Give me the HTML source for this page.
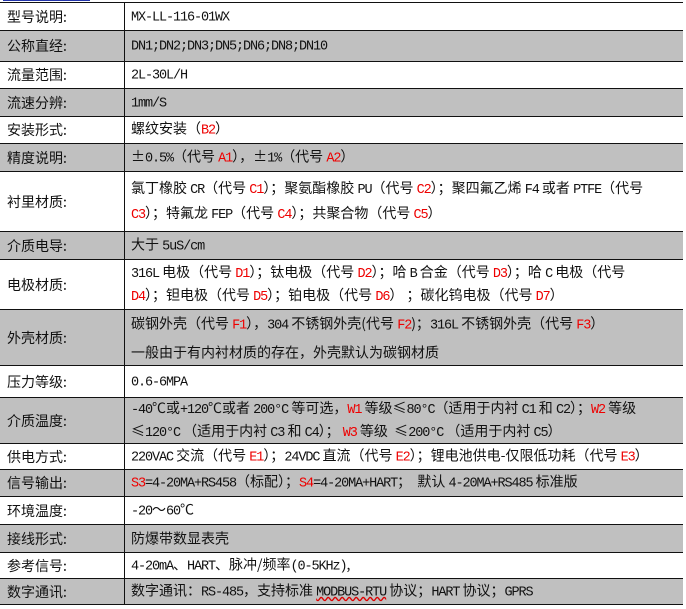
<!DOCTYPE html>
<html><head><meta charset="utf-8"><style>
body{margin:0;width:686px;height:609px;background:#fff;position:relative;overflow:hidden;font-family:"Noto Sans CJK SC","Liberation Sans",sans-serif;font-size:14px;color:#111}
.r{position:absolute;left:0;width:683px;border-top:1px solid #111;box-sizing:border-box}
.g{background:#c0c0c0}
.l{position:absolute;left:7px;font-size:14px;top:50%;transform:translateY(-50%);white-space:nowrap;line-height:16px}
.v{position:absolute;left:131px;right:0;top:50%;transform:translateY(-50%);line-height:25px;white-space:nowrap}
.d{position:absolute;left:124px;top:2px;width:1px;height:603px;background:#111}
i,b{font-style:normal;font-weight:normal;font-family:"Liberation Mono",monospace;font-size:13.5px;letter-spacing:-1.1px}
b{color:#e00}
</style></head><body>
<div style="position:absolute;left:3px;top:0;width:87px;height:1px;background:#2233aa"></div>
<div class="r" style="top:2px;height:28px"><span class="l">型号说明:</span><span class="v"><i>MX-LL-116-01WX</i></span></div>
<div class="r g" style="top:30px;height:31px"><span class="l">公称直经:</span><span class="v"><i>DN1;DN2;DN3;DN5;DN6;DN8;DN10</i></span></div>
<div class="r" style="top:61px;height:27px"><span class="l">流量范围:</span><span class="v"><i>2L-30L/H</i></span></div>
<div class="r g" style="top:88px;height:28px"><span class="l">流速分辨:</span><span class="v"><i>1mm/S</i></span></div>
<div class="r" style="top:116px;height:27px"><span class="l">安装形式:</span><span class="v">螺纹安装（<b>B2</b>）</span></div>
<div class="r g" style="top:143px;height:28px"><span class="l">精度说明:</span><span class="v">±<i>0.5%</i>（代号 <b>A1</b>），±<i>1%</i>（代号 <b>A2</b>）</span></div>
<div class="r" style="top:171px;height:60px"><span class="l">衬里材质:</span><span class="v" style="line-height:22px">氯丁橡胶 <i>CR</i>（代号 <b>C1</b>）；聚氨酯橡胶 <i>PU</i>（代号 <b>C2</b>）；聚四氟乙烯 <i>F4</i> 或者 <i>PTFE</i>（代号<br><b>C3</b>）；特氟龙 <i>FEP</i>（代号 <b>C4</b>）；共聚合物（代号 <b>C5</b>）</span></div>
<div class="r g" style="top:231px;height:28px"><span class="l">介质电导:</span><span class="v">大于 <i>5uS/cm</i></span></div>
<div class="r" style="top:259px;height:50px"><span class="l">电极材质:</span><span class="v" style="line-height:21px"><i>316L</i> 电极（代号 <b>D1</b>）；钛电极（代号 <b>D2</b>）；哈 <i>B</i> 合金（代号 <b>D3</b>）；哈 <i>C</i> 电极（代号<br><b>D4</b>）；钽电极（代号 <b>D5</b>）；铂电极（代号 <b>D6</b>） ；碳化钨电极（代号 <b>D7</b>）</span></div>
<div class="r g" style="top:309px;height:56px"><span class="l">外壳材质:</span><span class="v" style="line-height:26px">碳钢外壳（代号 <b>F1</b>），<i>304</i> 不锈钢外壳(代号 <b>F2</b>)；<i>316L</i> 不锈钢外壳（代号 <b>F3</b>）<br>一般由于有内衬材质的存在，外壳默认为碳钢材质</span></div>
<div class="r" style="top:365px;height:32px"><span class="l">压力等级:</span><span class="v"><i>0.6-6MPA</i></span></div>
<div class="r g" style="top:397px;height:46px"><span class="l">介质温度:</span><span class="v" style="line-height:21px"><i>-40</i>℃或<i>+120</i>℃或者 <i>200°C</i> 等可选，<b>W1</b> 等级≤<i>80°C</i>（适用于内衬 <i>C1</i> 和 <i>C2</i>）；<b>W2</b> 等级<br>≤<i>120°C</i> （适用于内衬 <i>C3</i> 和 <i>C4</i>）； <b>W3</b> 等级 &nbsp;≤<i>200°C</i> （适用于内衬 <i>C5</i>）</span></div>
<div class="r" style="top:443px;height:26px"><span class="l">供电方式:</span><span class="v"><i>220VAC</i> 交流（代号 <b>E1</b>）；<i>24VDC</i> 直流（代号 <b>E2</b>）；锂电池供电-仅限低功耗（代号 <b>E3</b>）</span></div>
<div class="r g" style="top:469px;height:27px"><span class="l">信号输出:</span><span class="v"><b>S3</b><i>=4-20MA+RS458</i>（标配）；<b>S4</b><i>=4-20MA+HART</i>；&nbsp; 默认 <i>4-20MA+RS485</i> 标准版</span></div>
<div class="r" style="top:496px;height:28px"><span class="l">环境温度:</span><span class="v"><i>-20</i>～<i>60</i>℃</span></div>
<div class="r g" style="top:524px;height:28px"><span class="l">接线形式:</span><span class="v">防爆带数显表壳</span></div>
<div class="r" style="top:552px;height:26px"><span class="l">参考信号:</span><span class="v"><i>4-20mA</i>、<i>HART</i>、脉冲/频率<i>(0-5KHz)</i>,</span></div>
<div class="r g" style="top:578px;height:27px;border-bottom:1px solid #111"><span class="l">数字通讯:</span><span class="v">数字通讯：<i>RS-485</i>，支持标准 <i style="text-decoration:underline wavy #d00">MODBUS-RTU</i> 协议；<i>HART</i> 协议；<i>GPRS</i></span></div>
<div class="d"></div>
</body></html>
